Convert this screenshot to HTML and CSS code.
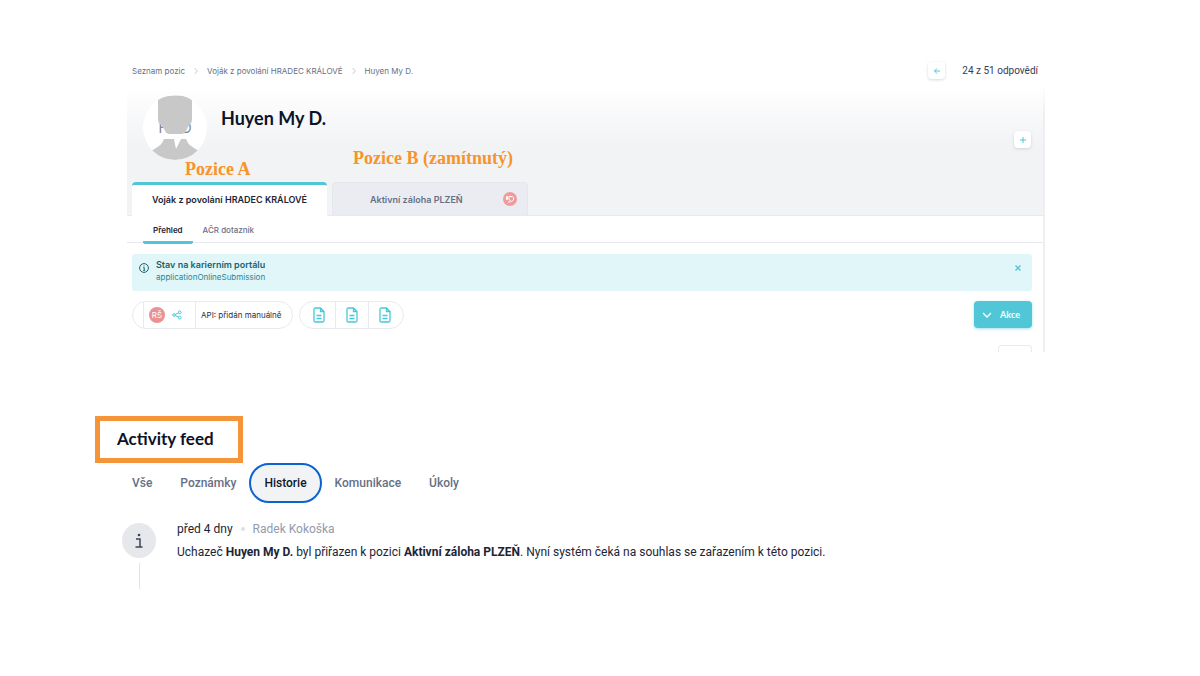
FILE: index.html
```html
<!DOCTYPE html>
<html lang="cs">
<head>
<meta charset="utf-8">
<title>Huyen My D.</title>
<link rel="stylesheet" href="styles.css">
</head>
<body>
<main class="page">
  <section class="candidate">
    <header class="topbar">
      <nav class="crumbs" aria-label="Navigace">
        <a href="#">Seznam pozic</a>
        <svg class="crumb-sep" viewBox="0 0 6 8"><path d="M1.500 1l3 3-3 3"/></svg>
        <a href="#">Voják z povolání HRADEC KRÁLOVÉ</a>
        <svg class="crumb-sep" viewBox="0 0 6 8"><path d="M1.500 1l3 3-3 3"/></svg>
        <a href="#">Huyen My D.</a>
      </nav>
      <div class="pager">
        <button class="square" aria-label="Předchozí"><svg viewBox="0 0 8 8"><path d="M7 4H1.500M4 1.500L1.500 4L4 6.500"/></svg></button>
        <span>24 z 51 odpovědí</span>
      </div>
    </header>
    <div class="panel">
      <div class="hero">
        <div class="profile">
          <div class="avatar">
            <span class="initials">HMD</span>
            <svg class="person" viewBox="0 0 64 65"><path d="M15 5Q17 1 32 0.500T49 5V25Q49 28 46 30L44 34Q42 39 38 39H27Q23 39 21 34L18 30Q15 28 15 25Z"/><path d="M21 44H31L33 54L38 44H43L45 48Q47 51 56 56Q46 65 32 65T8 56Q17 51 19 48Z"/></svg>
          </div>
          <h1>Huyen My D.</h1>
          <button class="square add" aria-label="Přidat"><svg viewBox="0 0 8 8"><path d="M4 1v6M1 4h6"/></svg></button>
          <span class="note note-a">Pozice A</span>
          <span class="note note-b">Pozice B (zamítnutý)</span>
        </div>
        <nav class="positions">
          <button class="position active">Voják z povolání HRADEC KRÁLOVÉ</button>
          <button class="position"><span>Aktivní záloha PLZEŇ</span>
            <svg class="reject" viewBox="0 0 14 14"><circle cx="7" cy="7" r="7"/><path d="M3.500 4.500h1v3h-1zM6 4.500h3.500l1 1V8L8.500 9.500L6 7.500zM5 10h2.500"/></svg>
          </button>
        </nav>
      </div>
      <nav class="subnav">
        <a class="current" href="#">Přehled</a>
        <a href="#">AČR dotazník</a>
      </nav>
      <div class="content">
        <div class="alert">
          <svg class="info" viewBox="0 0 10 10"><circle cx="5" cy="5" r="4.400"/><path d="M4.300 4.500H5.200V7.300M4.200 7.300h2M5 2.400v.9"/></svg>
          <div class="alert-text"><strong>Stav na karierním portálu</strong><span>applicationOnlineSubmission</span></div>
          <button class="close" aria-label="Zavřít"><svg viewBox="0 0 8 8"><path d="M1.500 1.500l5 5M6.500 1.500l-5 5"/></svg></button>
        </div>
        <div class="toolbar">
          <div class="pill">
            <span class="cap"></span>
            <span class="owner"><span class="badge">RŠ</span>
              <svg class="share" viewBox="0 0 10 10"><circle cx="2" cy="5" r="1.300"/><circle cx="7.700" cy="2.300" r="1.400"/><circle cx="7.700" cy="7.700" r="1.400"/><path d="M3.300 4.500L6.400 3M3.300 5.500L6.400 7"/></svg>
            </span>
            <span class="source">API: přidán manuálně</span>
          </div>
          <div class="pill docs">
            <button aria-label="Dokument 1"><svg viewBox="0 0 12 16"><path d="M2.500 1H7.500L11 4.500V13.500Q11 15 9.500 15H2.500Q1 15 1 13.500V2.500Q1 1 2.500 1ZM7.500 1V4.500H11M3.500 8.500h5M3.500 11.500h5"/></svg></button>
            <button aria-label="Dokument 2"><svg viewBox="0 0 12 16"><path d="M2.500 1H7.500L11 4.500V13.500Q11 15 9.500 15H2.500Q1 15 1 13.500V2.500Q1 1 2.500 1ZM7.500 1V4.500H11M3.500 8.500h5M3.500 11.500h5"/></svg></button>
            <button aria-label="Dokument 3"><svg viewBox="0 0 12 16"><path d="M2.500 1H7.500L11 4.500V13.500Q11 15 9.500 15H2.500Q1 15 1 13.500V2.500Q1 1 2.500 1ZM7.500 1V4.500H11M3.500 8.500h5M3.500 11.500h5"/></svg></button>
          </div>
          <button class="actions"><svg viewBox="0 0 10 6"><path d="M1 1l4 4 4-4"/></svg>Akce</button>
        </div>
        <div class="next-box"></div>
      </div>
    </div>
  </section>
  <section class="activity">
    <h2>Activity feed</h2>
    <nav class="filters">
      <button>Vše</button>
      <button>Poznámky</button>
      <button class="selected">Historie</button>
      <button>Komunikace</button>
      <button>Úkoly</button>
    </nav>
    <article class="entry">
      <div class="rail">
        <span class="disc"><svg viewBox="0 0 8 16"><circle cx="4" cy="2" r="1.300"/><path d="M1 6H5V14M.5 14H7.500"/></svg></span>
        <span class="line"></span>
      </div>
      <div class="entry-body">
        <p class="meta"><time>před 4 dny</time><i class="dot"></i><span>Radek Kokoška</span></p>
        <p class="message">Uchazeč <b>Huyen My D.</b> byl přiřazen k pozici <b>Aktivní záloha PLZEŇ</b>. Nyní systém čeká na souhlas se zařazením k této pozici.</p>
      </div>
    </article>
  </section>
</main>
</body>
</html>
```
FILE: styles.css
```css
* { box-sizing: border-box; }
body { margin: 0; background: #fff; color: #1c2536; font-family: Inter, "Liberation Sans", sans-serif; font-size: 12px; }
h1, h2, p { margin: 0; }
button { margin: 0; padding: 0; border: 0; background: none; color: inherit; font: inherit; cursor: pointer; }
a { color: inherit; text-decoration: none; }
svg { display: block; flex: none; fill: none; stroke: currentColor; }

.candidate { padding: 56px 155px 0 127px; }
.topbar { display: flex; align-items: center; justify-content: space-between; height: 29px; padding: 0 7px 0 5px; }
.crumbs { display: flex; align-items: center; gap: 8px; color: #667085; font-size: 8px; }
.crumb-sep { width: 6px; height: 8px; stroke: #c5cad3; }
.pager { display: flex; align-items: center; gap: 17px; color: #344054; font: 10px Roboto, sans-serif; }
.square { display: grid; place-items: center; width: 17px; height: 17px; border-radius: 4px; background: #fff; color: #50c6d6; box-shadow: 0 1px 3px #b9c0cc99; }
.square svg { width: 8px; height: 8px; }

.panel { border-right: 2px solid #eeeff3; border-image: linear-gradient(#fff, #eeeff3 30px) 1; }
.hero { background: linear-gradient(#fff 0, #f2f3f5 60px); border-bottom: 1px solid #e8e9ed; }
.profile { position: relative; display: flex; align-items: flex-start; height: 97px; padding: 10px 12px 0 16px; }
.avatar { position: relative; width: 64px; height: 65px; border-radius: 50%; background: #fff; overflow: hidden; display: grid; place-items: center; }
.initials { color: #7b8797; font-size: 14px; }
.person { position: absolute; inset: 0; width: 64px; height: 65px; fill: #c8c8c8; stroke: none; }
h1, h2 { color: #0b1328; font-family: Lato, sans-serif; font-weight: 700; }
h1 { padding-left: 14px; font-size: 18px; line-height: 46px; }
.add { margin: 36px 0 0 auto; }
.note { position: absolute; color: #f7942b; font: bold 18px/20px "Liberation Serif", serif; }
.note-a { left: 58px; top: 74px; }
.note-b { left: 226px; top: 63px; }
.positions { display: flex; gap: 5px; padding: 0 5px; }
.position { display: flex; align-items: center; justify-content: center; width: 195px; height: 33px; border-radius: 4px 4px 0 0; background: #ebecf1; border: 1px solid #e6e7ed; border-bottom: 0; color: #667085; font-size: 9px; font-weight: 600; }
.position.active { margin-bottom: -1px; height: 34px; padding-bottom: 2px; border: 0; border-top: 3px solid #50c6d6; background: #fff; color: #1c2536; }
.position:not(.active) { width: 196px; padding: 0 10px 0 37px; justify-content: space-between; }
.reject { width: 14px; height: 14px; stroke: #fff; }
.reject circle { fill: #f2999c; stroke: none; }

.subnav { display: flex; height: 27px; padding-left: 16px; border-bottom: 1px solid #e6e8ee; color: #667085; font-size: 8px; font-weight: 500; line-height: 28px; }
.subnav a { height: 28px; padding: 0 10px; }
.subnav .current { border-bottom: 3px solid #50c6d6; border-radius: 2px; color: #1c2536; font-weight: 600; }
.content { padding: 11px 11px 0 5px; }
.alert { display: flex; align-items: flex-start; height: 37px; padding: 5px 10px 0 7px; border-radius: 3px; background: #e0f6f9; color: #17646d; }
.info { width: 10px; height: 10px; margin-top: 4px; }
.alert-text { display: flex; flex-direction: column; padding-left: 7px; font-size: 9px; line-height: 12px; }
.alert-text strong { font-weight: 600; }
.alert-text span { color: #258791; font-size: 8px; }
.close { margin: 5px 0 0 auto; color: #50c6d6; }
.close svg { width: 8px; height: 8px; stroke-width: 1.300; }
.toolbar { display: flex; gap: 6px; padding-top: 10px; }
.pill { display: flex; height: 28px; border: 1px solid #e9eaee; border-radius: 14px; overflow: hidden; }
.pill > * + * { border-left: 1px solid #e9eaee; }
.cap { width: 10px; }
.owner { display: flex; align-items: center; gap: 7px; width: 52px; padding-left: 5px; }
.badge { display: grid; place-items: center; width: 16px; height: 16px; border-radius: 50%; background: #ea9292; color: #fff; font-size: 8px; }
.share { width: 10px; height: 10px; color: #50c6d6; }
.source { display: flex; align-items: center; padding: 0 11px 0 5px; font-size: 8px; color: #29313f; }
.docs button { display: grid; place-items: center; width: 33px; color: #45c8d7; }
.docs button:first-child, .docs button:last-child { width: 35px; padding-left: 2px; }
.docs button:last-child { padding: 0 2px 0 0; }
.docs svg { width: 12px; height: 16px; stroke-width: 1.300; }
.actions { display: flex; align-items: center; gap: 8px; height: 27px; margin-left: auto; padding: 0 12px 0 8px; border-radius: 4px; background: #50c6d6; box-shadow: 0 1px 3px #50c6d688; color: #fff; font: 700 9px Lato, sans-serif; }
.actions svg { width: 10px; height: 6px; stroke-width: 1.300; }
.next-box { width: 34px; height: 7px; margin: 16px 0 0 auto; border: 1px solid #e9eaee; border-bottom: 0; border-radius: 4px 4px 0 0; }

.activity { padding: 64px 95px 0; }
h2 { width: fit-content; padding: 0 24px 2px 17px; border: 5px solid #f6943a; font-size: 17px; line-height: 35px; }
.filters { display: flex; padding-left: 23px; color: #667085; font-family: Roboto, sans-serif; font-weight: 500; }
.filters button { height: 40px; padding: 0 14px; border-radius: 20px; }
.filters .selected { margin: 0 -1px; padding: 0 13px; border: 2px solid #0b63d1; background: #f2f3f5; color: #0f172a; }
.entry { display: flex; gap: 21px; padding: 20px 0 0 27px; font-family: Roboto, sans-serif; }
.rail { display: flex; flex-direction: column; align-items: center; gap: 5px; }
.disc { display: grid; place-items: center; width: 34px; height: 35px; border-radius: 50%; background: #e7e8ec; color: #3c4558; }
.disc svg { width: 8px; height: 16px; stroke-width: 1.500; }
.disc circle { fill: currentColor; stroke: none; }
.line { width: 1px; height: 26px; background: #e4e4e8; }
.meta { display: flex; align-items: center; color: #919bab; line-height: 12px; }
.meta time { color: #1c2536; }
.dot { width: 4px; height: 4px; margin: 0 8px; border-radius: 50%; background: #dde1e7; }
.message { padding-top: 8px; line-height: 18px; }
.message b { font-weight: 700; }
```
